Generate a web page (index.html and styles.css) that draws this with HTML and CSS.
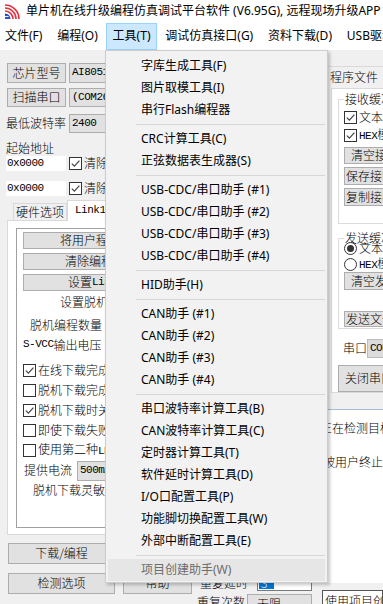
FILE: index.html
```html
<!DOCTYPE html>
<html lang="zh-CN">
<head>
<meta charset="utf-8">
<title>STC-ISP</title>
<link rel="stylesheet" href="styles.css">
</head>
<body>
<header class="titlebar">
  <svg class="appicon" viewBox="0 0 16 16" width="16" height="16">
    <g fill="none" stroke="#e5323c" stroke-width="1.6">
      <path d="M1 7 A8 8 0 0 1 9 15"/>
      <path d="M1 4 A11 11 0 0 1 12 15"/>
      <path d="M1 1 A14 14 0 0 1 15 15"/>
    </g>
    <path d="M1 15 V9.5 A5.5 5.5 0 0 1 6.5 15 Z" fill="#1f4fd0"/>
    <path d="M1 12.6 H4.6" stroke="#fff" stroke-width="1"/>
  </svg>
  <span class="title">单片机在线升级编程仿真调试平台软件 (V6.95G), 远程现场升级APP</span>
</header>
<nav class="menubar">
  <span class="mi first">文件(F)</span>
  <span class="mi">编程(O)</span>
  <span class="mi active">工具(T)</span>
  <span class="mi">调试仿真接口(G)</span>
  <span class="mi">资料下载(D)</span>
  <span class="mi">USB驱动(U)</span>
</nav>
<main class="client">
  <section class="left">
    <div class="row r-chip"><div class="btn b-chip">芯片型号</div><div class="combo"><span class="s">AI8051U</span></div></div>
    <div class="row r-port"><div class="btn b-chip">扫描串口</div><div class="combo"><span class="s">(COM26)</span></div></div>
    <div class="row r-baud"><span class="l-baud">最低波特率</span><div class="combo"><span class="s">2400</span></div></div>
    <div class="row r-addr-l">起始地址</div>
    <div class="row r-addr"><div class="edit"><span class="s">0x0000</span></div><span class="cb"><svg viewBox="0 0 11 11" width="11" height="11"><path d="M1.8 5.6 L4.4 8.2 L9.4 2.6" fill="none" stroke="#444" stroke-width="1.2"/></svg></span><span class="cbt">清除代码空间</span></div>
    <div class="row r-addr r-addr2"><div class="edit"><span class="s">0x0000</span></div><span class="cb"><svg viewBox="0 0 11 11" width="11" height="11"><path d="M1.8 5.6 L4.4 8.2 L9.4 2.6" fill="none" stroke="#444" stroke-width="1.2"/></svg></span><span class="cbt">清除EEPROM区</span></div>
    <div class="tabs">
      <div class="tgap"></div>
      <div class="tab">硬件选项</div>
      <div class="tab sel"><span class="s">Link1</span>脱机</div>
      <div class="tfill"></div>
    </div>
    <div class="page">
      <div class="grp">
        <div class="btn gbtn g1">将用户程序下载到Link1</div>
        <div class="btn gbtn g2">清除编程器内程序</div>
        <div class="btn gbtn g3">设置<span class="s">Link1</span>选项</div>
        <div class="row gr gr-set">设置脱机下载选项</div>
        <div class="row gr gr-num">脱机编程数量</div>
        <div class="row gr gr-vcc"><span class="s">S-VCC</span>输出电压</div>
        <div class="row gr gr-cb first-cb"><span class="cb"><svg viewBox="0 0 11 11" width="11" height="11"><path d="M1.8 5.6 L4.4 8.2 L9.4 2.6" fill="none" stroke="#444" stroke-width="1.2"/></svg></span><span class="cbt">在线下载完成后</span></div>
        <div class="row gr gr-cb"><span class="cb"></span><span class="cbt">脱机下载完成后</span></div>
        <div class="row gr gr-cb"><span class="cb"><svg viewBox="0 0 11 11" width="11" height="11"><path d="M1.8 5.6 L4.4 8.2 L9.4 2.6" fill="none" stroke="#444" stroke-width="1.2"/></svg></span><span class="cbt">脱机下载时关闭</span></div>
        <div class="row gr gr-cb"><span class="cb"></span><span class="cbt">即使下载失败</span></div>
        <div class="row gr gr-cb"><span class="cb"></span><span class="cbt">使用第二种<span class="s">LED</span></span></div>
        <div class="row gr gr-cur"><span class="l-cur">提供电流</span><div class="combo c-cur"><span class="s">500mA</span></div></div>
        <div class="row gr gr-sens">脱机下载灵敏度</div>
      </div>
    </div>
    <div class="actions">
      <div class="btn">下载/编程</div>
      <div class="btn">停止</div>
      <div class="btn">检测选项</div>
      <div class="btn">帮助</div>
    </div>
  </section>
  <section class="mid">
    <div class="row mrow1"><span class="m-l1">重复延时</span><div class="medit"><span class="sel">3</span></div></div>
    <div class="row mrow2"><span class="m-l2">重复次数</span><div class="combo m-c2">无限</div></div>
  </section>
  <section class="right">
    <div class="rtabs">程序文件</div>
    <div class="rpage">
      <fieldset class="rg rg1">
        <legend>接收缓冲区</legend>
        <div class="row rr rr1"><span class="cb"><svg viewBox="0 0 11 11" width="11" height="11"><path d="M1.8 5.6 L4.4 8.2 L9.4 2.6" fill="none" stroke="#444" stroke-width="1.2"/></svg></span><span class="cbt">文本模式</span></div>
        <div class="row rr"><span class="cb"><svg viewBox="0 0 11 11" width="11" height="11"><path d="M1.8 5.6 L4.4 8.2 L9.4 2.6" fill="none" stroke="#444" stroke-width="1.2"/></svg></span><span class="cbt"><span class="s">HEX</span>模式</span></div>
        <div class="btn rbtn rb-clr">清空接收区</div>
        <div class="btn rbtn rb-save">保存接收数据</div>
        <div class="btn rbtn rb-copy">复制接收数据</div>
      </fieldset>
      <fieldset class="rg rg2">
        <legend>发送缓冲区</legend>
        <div class="row rr rr-r1"><span class="rb on"></span><span class="cbt">文本模式</span></div>
        <div class="row rr"><span class="rb"></span><span class="cbt"><span class="s">HEX</span>模式</span></div>
        <div class="btn rbtn rb-clr2">清空发送区</div>
        <div class="btn rbtn rb-send">发送文件</div>
      </fieldset>
      <div class="row rport"><span class="rp-l">串口</span><div class="combo rp-c"><span class="s">COM26</span></div></div>
      <div class="btn rbtn rb-close">关闭串口</div>
    </div>
    <div class="log">
      <div class="ln ln1">正在检测目标单片机 ...</div>
      <div class="ln">&nbsp;</div>
      <div class="ln ln3">被用户终止</div>
    </div>
    <div class="proj">使用项目创建助手</div>
  </section>
</main>
<div class="dropdown">
  <div class="dd">字库生成工具(F)</div>
  <div class="dd">图片取模工具(I)</div>
  <div class="dd">串行Flash编程器</div>
  <div class="sep"></div>
  <div class="dd">CRC计算工具(C)</div>
  <div class="dd">正弦数据表生成器(S)</div>
  <div class="sep"></div>
  <div class="dd">USB-CDC/串口助手 (#1)</div>
  <div class="dd">USB-CDC/串口助手 (#2)</div>
  <div class="dd">USB-CDC/串口助手 (#3)</div>
  <div class="dd">USB-CDC/串口助手 (#4)</div>
  <div class="sep"></div>
  <div class="dd">HID助手(H)</div>
  <div class="sep"></div>
  <div class="dd">CAN助手 (#1)</div>
  <div class="dd">CAN助手 (#2)</div>
  <div class="dd">CAN助手 (#3)</div>
  <div class="dd">CAN助手 (#4)</div>
  <div class="sep"></div>
  <div class="dd">串口波特率计算工具(B)</div>
  <div class="dd">CAN波特率计算工具(C)</div>
  <div class="dd">定时器计算工具(T)</div>
  <div class="dd">软件延时计算工具(D)</div>
  <div class="dd">I/O口配置工具(P)</div>
  <div class="dd">功能脚切换配置工具(W)</div>
  <div class="dd">外部中断配置工具(E)</div>
  <div class="sep"></div>
  <div class="dd off">项目创建助手(W)</div>
</div>
</body>
</html>
```

FILE: styles.css
```css
* { box-sizing: border-box; }
html, body { margin: 0; padding: 0; }
body {
  width: 383px;
  height: 604px;
  overflow: hidden;
  background: #f0f0f0;
  color: #000;
  font-family: "Noto Sans CJK SC", "Noto Sans", sans-serif;
  font-size: 12px;
  line-height: 1.2;
  position: relative;
}
.s {
  font-family: "Liberation Mono", "Noto Sans CJK SC", monospace;
  font-size: 11px;
  letter-spacing: -0.5px;
}

/* title bar */
.titlebar {
  height: 23px;
  background: #fff;
  display: flex;
  align-items: center;
  padding-left: 4px;
  white-space: nowrap;
  overflow: hidden;
}
.appicon { width: 16px; height: 16px; flex: none; margin-right: 6px; }
.title, .menubar, .dropdown { font-family: "Noto Sans", "Noto Sans CJK SC", sans-serif; }

/* menu bar */
.menubar {
  height: 27px;
  background: #fff;
  display: flex;
  gap: 0.8px;
  white-space: nowrap;
  overflow: hidden;
}
.mi {
  display: flex;
  align-items: center;
  padding: 0 6px;
  border: 1px solid transparent;
  flex: none;
}
.mi.first { margin-left: -2px; }
.mi.active { background: #cce8ff; border-color: #99d1ff; }

/* client */
.client { display: flex; height: 554px; font-weight: 300; }
.left { width: 196px; flex: none; display: flex; flex-direction: column; }
.row { display: flex; align-items: center; white-space: nowrap; flex: none; }
.btn {
  background: #e1e1e1;
  border: 1px solid #adadad;
  display: flex;
  align-items: center;
  justify-content: center;
  white-space: nowrap;
  overflow: hidden;
  flex: none;
}
.combo {
  background: #e1e1e1;
  border: 1px solid #adadad;
  display: flex;
  align-items: center;
  padding-left: 2px;
  white-space: nowrap;
  overflow: hidden;
  flex: none;
}
.cb {
  width: 13px;
  height: 13px;
  border: 1px solid #333;
  background: #fff;
  display: inline-flex;
  align-items: center;
  justify-content: center;
  flex: none;
}
.cbt { margin-left: 2px; }
.rb {
  width: 13px;
  height: 13px;
  border: 1px solid #333;
  border-radius: 50%;
  background: #fff;
  display: inline-flex;
  align-items: center;
  justify-content: center;
  flex: none;
}
.rb.on::after {
  content: "";
  width: 7px;
  height: 7px;
  border-radius: 50%;
  background: #333;
}

.r-chip { margin-top: 13px; height: 20px; gap: 3px; padding-left: 7px; }
.r-port { margin-top: 5px; height: 19px; gap: 3px; padding-left: 7px; }
.b-chip { width: 59px; height: 100%; }
.r-chip .combo, .r-port .combo, .r-baud .combo { width: 120px; height: 100%; }
.r-baud { margin-top: 7px; height: 19px; padding-left: 6px; }
.l-baud { width: 63px; }
.r-addr-l { margin-top: 8px; height: 15px; padding-left: 6px; }
.r-addr { height: 15px; padding-left: 6px; }
.r-addr2 { margin-top: 10px; }
.edit {
  width: 60px;
  height: 15px;
  background: #fff;
  display: flex;
  align-items: center;
  padding-left: 1px;
  margin-right: 3px;
  flex: none;
}

/* tabs */
.tabs {
  display: flex;
  align-items: flex-end;
  height: 21px;
  margin-top: 4px;
  margin-left: 7px;
  width: 185px;
  flex: none;
}
.tgap { width: 6px; border-bottom: 1px solid #d9d9d9; flex: none; }
.tfill { flex: 1; border-bottom: 1px solid #d9d9d9; }
.tab {
  width: 54px;
  height: 18px;
  border: 1px solid #d9d9d9;
  background: #f0f0f0;
  display: flex;
  align-items: center;
  justify-content: center;
  flex: none;
}
.tab.sel {
  width: 64px;
  height: 21px;
  border-bottom: none;
  background: #fff;
  justify-content: flex-start;
  padding-left: 7px;
  white-space: nowrap;
  overflow: hidden;
}
.page {
  margin-left: 7px;
  width: 185px;
  height: 314px;
  background: #fff;
  border: 1px solid #d9d9d9;
  border-top: none;
  padding-top: 7px;
  padding-left: 8px;
  flex: none;
}
.grp {
  width: 172px;
  height: 300px;
  border: 1px solid #a0a0a0;
  display: flex;
  flex-direction: column;
}
.gbtn {
  width: 160px;
  height: 17px;
  margin-left: 6px;
  margin-top: 4px;
  justify-content: flex-start;
}
.g1 { margin-top: 3px; padding-left: 36px; }
.g2 { padding-left: 41px; }
.g3 { padding-left: 44px; }
.gr { height: 20px; }
.gr-set { margin-top: 1px; padding-left: 43px; }
.gr-num { margin-top: 3px; padding-left: 13px; }
.gr-vcc { padding-left: 6px; }
.gr-cb { padding-left: 6px; }
.first-cb { margin-top: 5px; }
.gr-cur { height: 21px; padding-left: 7px; }
.l-cur { width: 53px; }
.c-cur { width: 60px; height: 20px; }
.gr-sens { height: 18px; padding-left: 16px; }

.actions {
  margin-top: 8px;
  margin-left: 8px;
  display: grid;
  grid-template-columns: 107px 69px;
  grid-auto-rows: 21px;
  column-gap: 8px;
  row-gap: 9px;
}

/* middle column */
.mid { width: 122px; flex: none; padding-top: 525px; }
.mrow1 { height: 16px; padding-left: 4px; }
.m-l1 { width: 57px; }
.medit {
  width: 55px;
  height: 16px;
  background: #fff;
  border: 1px solid #7a7a7a;
  padding: 1px;
  display: flex;
  flex: none;
}
.medit .sel {
  background: #0078d7;
  color: #fff;
  width: 15px;
  height: 12px;
  line-height: 12px;
  padding-left: 2px;
}
.mrow2 { margin-top: 3px; height: 20px; padding-left: 1px; align-items: flex-start; }
.m-l2 { width: 50px; line-height: 14px; margin-top: 1px; }
.m-c2 { width: 65px; height: 20px; padding-left: 9px; }

/* right column */
.right { width: 65px; flex: none; display: flex; flex-direction: column; }
.rtabs {
  margin-top: 16px;
  height: 22px;
  border-top: 1px solid #d9d9d9;
  padding-left: 12px;
  display: flex;
  align-items: center;
  white-space: nowrap;
  flex: none;
}
.rpage {
  margin-left: 13px;
  height: 305px;
  border: 1px solid #d9d9d9;
  border-right: none;
  background: #fff;
  padding-left: 6px;
  flex: none;
  overflow: hidden;
}
.rg {
  margin: 0;
  padding: 0 0 0 5px;
  border: 1px solid #dcdcdc;
  border-right: none;
  min-width: 0;
}
.rg legend {
  padding: 0 1px;
  line-height: 12px;
  white-space: nowrap;
}
.rg1 { margin-top: 4px; height: 131px; }
.rg2 { margin-top: 8px; height: 97px; }
.rr { height: 18px; }
.rr1 { margin-top: 3px; }
.rr-r1 { margin-top: -4px; height: 16px; }
.rg2 .rr { height: 16px; }
.rbtn { width: 60px; justify-content: flex-start; }
.rb-clr { height: 17px; margin-top: 3px; padding-left: 6px; }
.rb-save { height: 18px; margin-top: 3px; padding-left: 1px; }
.rb-copy { height: 18px; margin-top: 3px; padding-left: 1px; }
.rb-clr2 { height: 18px; padding-left: 6px; }
.rb-send { height: 16px; margin-top: 21px; padding-left: 1px; }
.rport { margin-top: 10px; height: 19px; }
.rp-l { margin-left: 5px; width: 27px; }
.rp-c { width: 40px; height: 19px; background: #dcdcdc; border-color: #bcbcbc; }
.rb-close { height: 27px; margin-top: 7px; padding-left: 6px; }
.log {
  margin-top: 16px;
  height: 174px;
  background: #fff;
  border-top: 1px solid #a6bcd6;
  padding-top: 9px;
  line-height: 17px;
  white-space: nowrap;
  overflow: hidden;
  flex: none;
}
.ln1 { padding-left: 2px; }
.ln3 { padding-left: 5px; }
.proj {
  margin: 7px 0 0 4px;
  height: 22px;
  border: 1px solid #555;
  background: #fff;
  padding-left: 2px;
  line-height: 20px;
  white-space: nowrap;
  overflow: hidden;
  flex: none;
}

/* dropdown menu */
.dropdown {
  position: absolute;
  left: 105px;
  top: 50px;
  width: 223px;
  background: #f2f2f2;
  border: 1px solid #cccccc;
  padding: 4px 0 1px;
  box-shadow: 2px 2px 3px rgba(0, 0, 0, 0.22);
}
.dd {
  height: 22px;
  line-height: 22px;
  margin: 0 2px;
  padding-left: 33px;
  white-space: nowrap;
}
.dd.off { color: #6d6d6d; background: #e6e6e6; }
.sep {
  height: 1px;
  background: #d7d7d7;
  margin: 3px 2px 3px 30px;
}
```
